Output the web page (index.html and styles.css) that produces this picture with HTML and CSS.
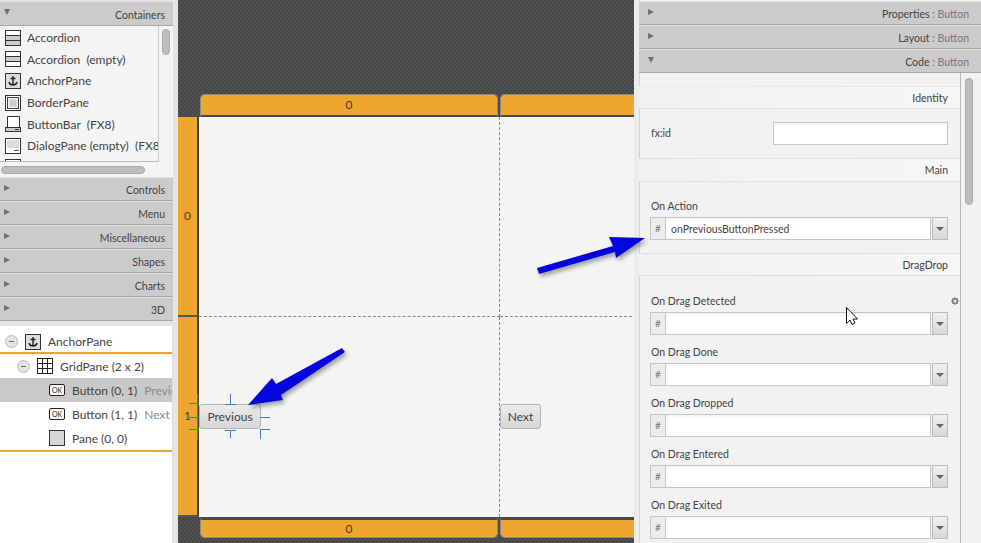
FILE: index.html
```html
<!DOCTYPE html>
<html lang="en">
<head>
<meta charset="utf-8">
<title>Scene Builder</title>
<link rel="stylesheet" href="styles.css">
</head>
<body>
<svg class="defs" width="0" height="0" aria-hidden="true">
  <symbol id="i-acc" viewBox="0 0 16 16"><rect x=".5" y=".5" width="15" height="15" fill="#ccc" stroke="#333"/><rect x="1" y="1" width="14" height="4" fill="#fff"/><path d="M1 5.500H15M1 10.500H15" stroke="#333"/></symbol>
  <symbol id="i-acc2" viewBox="0 0 16 16"><rect x=".5" y=".5" width="15" height="15" fill="#fff" stroke="#333"/><rect x="1" y="6" width="14" height="5" fill="#ccc"/><path d="M1 5.500H15M1 10.500H15" stroke="#333"/></symbol>
  <symbol id="i-anchor" viewBox="0 0 16 16"><rect x=".5" y=".5" width="15" height="15" fill="#ddd" stroke="#333"/><path d="M8 3V12M5.500 5.500H10.500M4 9C4.500 11.500 6 12 8 12S11.500 11.500 12 9" fill="none" stroke="#222" stroke-width="1.400"/></symbol>
  <symbol id="i-border" viewBox="0 0 16 16"><rect x=".5" y=".5" width="15" height="15" fill="#fff" stroke="#333"/><rect x="2.500" y="2.500" width="11" height="11" fill="#eee" stroke="#444"/><rect x="4.500" y="4.500" width="7" height="7" fill="#ccc"/></symbol>
  <symbol id="i-bar" viewBox="0 0 16 16"><path d="M2.500 .5H14.500V12.500H2.500Z" fill="#fff" stroke="#333"/><rect x=".5" y="11.500" width="15" height="4" fill="#ccc" stroke="#333"/><path d="M10 13.500H14" stroke="#333"/></symbol>
  <symbol id="i-dialog" viewBox="0 0 16 16"><rect x=".5" y=".5" width="15" height="15" fill="#fff" stroke="#333"/><rect x="2" y="2" width="12" height="8" fill="#ddd"/><path d="M9 12.500H14" stroke="#555"/></symbol>
  <symbol id="i-grid" viewBox="0 0 16 16"><rect x=".5" y=".5" width="15" height="15" fill="#fff" stroke="#222"/><path d="M5.500 1V15M10.500 1V15M1 5.500H15M1 10.500H15" stroke="#222"/></symbol>
  <symbol id="i-pane" viewBox="0 0 16 16"><rect x=".5" y=".5" width="15" height="15" fill="#d6d6d6" stroke="#333"/></symbol>
</svg>

<div class="app">
  <aside class="left">
    <div class="library">
      <div class="acc-head first"><span class="tri down"></span><span class="acc-title">Containers</span></div>
      <div class="palette">
        <div class="palette-view">
          <ul class="palette-list">
            <li><svg class="ico"><use href="#i-acc"/></svg>Accordion</li>
            <li><svg class="ico"><use href="#i-acc2"/></svg>Accordion&nbsp; (empty)</li>
            <li><svg class="ico"><use href="#i-anchor"/></svg>AnchorPane</li>
            <li><svg class="ico"><use href="#i-border"/></svg>BorderPane</li>
            <li><svg class="ico"><use href="#i-bar"/></svg>ButtonBar&nbsp; (FX8)</li>
            <li><svg class="ico"><use href="#i-dialog"/></svg>DialogPane (empty)&nbsp; (FX8)</li>
            <li><svg class="ico"><use href="#i-dialog"/></svg></li>
          </ul>
          <div class="vscroll"><span class="vthumb"></span></div>
        </div>
        <div class="hscroll"><span class="hthumb"></span></div>
      </div>
      <div class="acc-head"><span class="tri"></span><span class="acc-title">Controls</span></div>
      <div class="acc-head"><span class="tri"></span><span class="acc-title">Menu</span></div>
      <div class="acc-head"><span class="tri"></span><span class="acc-title">Miscellaneous</span></div>
      <div class="acc-head"><span class="tri"></span><span class="acc-title">Shapes</span></div>
      <div class="acc-head"><span class="tri"></span><span class="acc-title">Charts</span></div>
      <div class="acc-head"><span class="tri"></span><span class="acc-title">3D</span></div>
    </div>
    <div class="tree">
      <div class="row r-root"><span class="minus"></span><svg class="ico"><use href="#i-anchor"/></svg>AnchorPane</div>
      <div class="row r-grid"><span class="minus"></span><svg class="ico"><use href="#i-grid"/></svg>GridPane (2 x 2)</div>
      <div class="row r-leaf selected"><span class="okico">OK</span>Button (0, 1)<span class="hint">Previous</span></div>
      <div class="row r-leaf"><span class="okico">OK</span>Button (1, 1)<span class="hint">Next</span></div>
      <div class="row r-leaf r-last"><svg class="ico"><use href="#i-pane"/></svg>Pane (0, 0)</div>
    </div>
  </aside>

  <main class="center">
    <div class="grid">
      <div class="corner"></div>
      <div class="col-head"><span>0</span></div>
      <div class="col-head second"><span>1</span></div>

      <div class="row-head"><span>0</span></div>
      <div class="cell c-tl"></div>
      <div class="cell c-tr"></div>

      <div class="row-head"><span>1</span></div>
      <div class="cell c-bl"><button class="fx-btn selected-btn">Previous</button></div>
      <div class="cell c-br"><button class="fx-btn next-btn">Next</button></div>

      <div class="corner"></div>
      <div class="col-head bottom"><span>0</span></div>
      <div class="col-head bottom second"><span>1</span></div>
    </div>
  </main>

  <aside class="right">
    <div class="acc-head r"><span class="tri"></span><span class="acc-title">Properties <em>: Button</em></span></div>
    <div class="acc-head r"><span class="tri"></span><span class="acc-title">Layout <em>: Button</em></span></div>
    <div class="acc-head r"><span class="tri down"></span><span class="acc-title">Code <em>: Button</em></span></div>
    <div class="inspector">
      <div class="props">
        <div class="section s-first">Identity</div>
        <div class="fxid"><label>fx:id</label><span class="input"></span></div>
        <div class="section">Main</div>
        <div class="field f-action">
          <label>On Action</label>
          <div class="combo"><span class="hash">#</span><span class="input text">onPreviousButtonPressed</span><span class="drop"></span></div>
        </div>
        <div class="section s-drag">DragDrop</div>
        <div class="field f-first">
          <label>On Drag Detected</label>
          <div class="combo"><span class="hash">#</span><span class="input"></span><span class="drop"></span></div>
        </div>
        <div class="field">
          <label>On Drag Done</label>
          <div class="combo"><span class="hash">#</span><span class="input"></span><span class="drop"></span></div>
        </div>
        <div class="field">
          <label>On Drag Dropped</label>
          <div class="combo"><span class="hash">#</span><span class="input"></span><span class="drop"></span></div>
        </div>
        <div class="field">
          <label>On Drag Entered</label>
          <div class="combo"><span class="hash">#</span><span class="input"></span><span class="drop"></span></div>
        </div>
        <div class="field">
          <label>On Drag Exited</label>
          <div class="combo"><span class="hash">#</span><span class="input"></span><span class="drop"></span></div>
        </div>
      </div>
      <div class="iscroll"><span class="ithumb"></span></div>
    </div>
  </aside>
</div>

<svg class="overlay" width="981" height="543" viewBox="0 0 981 543" aria-hidden="true">
  <g class="handles">
    <path d="M197.500 394V440M189 403.500H199M189 417.500H199M189 429.500H199M230.500 394V404M225 404.500H236M230.500 430V438M225 430.500H236M260 417.500H270M260 429.500H270M260.500 429V439"/>
  </g>
  <g class="gear"><circle cx="955" cy="301" r="2.300"/><path d="M955 297V305M951 301H959M952.200 298.200L957.800 303.800M957.800 298.200L952.200 303.800"/></g>
  <polygon class="arrow" points="248,405 272,378 276,384 342,348 345,352 281,395 283,400"/>
  <polygon class="arrow" points="645,238 609,237 613,246 537,268 539,274 615,252 616,258"/>
  <path class="cursor" d="M846.500 307.500V323.500L850 320L852 324.500L855 323L853 319H857.500Z"/>
</svg>
</body>
</html>
```
FILE: styles.css
```css
* { box-sizing: border-box; }
html, body { margin: 0; padding: 0; height: 100%; overflow: hidden; background: #f2f2f2; }
body { font-family: Lato, "Open Sans", "Liberation Sans", sans-serif; font-size: 11px; color: #444; }
.defs { position: absolute; }
.app { display: flex; width: 981px; height: 543px; }

/* accordion headers */
.acc-head {
  display: flex; align-items: center; justify-content: space-between;
  height: 24px; padding: 0 8px 0 4px;
  background: #cbcbcb; border-top: 1px solid #e0e0e0; border-bottom: 1px solid #a9a9a9;
}
.acc-head.first { height: 25px; margin-top: 1px; }
.acc-title { color: #444; font-size: 10.500px; margin-top: 2px; }
.acc-title em { font-style: normal; color: #777; }
.tri { width: 0; height: 0; border-style: solid; border-width: 3.500px 0 3.500px 6px; border-color: transparent transparent transparent #707070; margin-top: -3px; }
.tri.down { border-width: 6px 3.500px 0 3.500px; border-color: #707070 transparent transparent transparent; }

/* left column */
.left { width: 178px; flex: none; display: flex; flex-direction: column; background: #e4e4e4; }
.library { width: 173px; }
.palette { height: 151px; background: #f4f4f4; display: flex; flex-direction: column; }
.palette-view { display: flex; height: 136px; }
.palette-list { list-style: none; margin: 0; padding: 1px 0 0 5px; width: 159px; height: 136px; overflow: hidden; background: #f4f4f4; border-right: 1px solid #ccc; border-bottom: 1px solid #bbb; }
.palette-list li { display: flex; align-items: center; height: 21.600px; flex: none; white-space: nowrap; font-size: 12px; }
.ico { width: 16px; height: 16px; margin-right: 6px; flex: none; }
.vscroll { flex: 1; padding: 3px 3px 0 3px; }
.vthumb { display: block; width: 8px; height: 26px; border-radius: 4px; background: #bdbdbd; border: 1px solid #aaa; }
.hscroll { height: 15px; padding: 4px 0 0 1px; }
.hthumb { display: block; width: 144px; height: 8px; border-radius: 4px; background: #bdbdbd; border: 1px solid #aaa; }

.tree { margin-top: 5px; width: 173px; flex: 1; background: #fff; padding-top: 5px; border-right: 1px solid #ddd; overflow: hidden; }
.row { display: flex; align-items: center; white-space: nowrap; font-size: 12px; height: 24px; overflow: hidden; }
.r-root { height: 21px; padding-left: 5px; }
.r-root .ico { margin: 0 7px 0 7px; }
.r-grid { padding-left: 17px; border-top: 2px solid #e9a638; height: 26px; }
.r-grid .ico { margin: 0 7px 0 7px; }
.r-leaf { padding-left: 49px; }
.r-leaf .ico { margin-right: 7px; }
.r-last { border-bottom: 2px solid #e9a638; height: 26px; }
.selected { background: #c9c9c9; }
.hint { margin-left: 7px; color: #8a8a8a; }
.minus { width: 13px; height: 13px; border-radius: 50%; background: #e4e4e4; border: 1px solid #bbb; position: relative; flex: none; }
.minus::after { content: ""; position: absolute; left: 3px; top: 5px; width: 5px; height: 1px; background: #666; }
.okico { width: 16px; height: 12px; border: 1px solid #222; border-radius: 2px; margin-right: 7px; font-size: 7px; line-height: 10px; text-align: center; color: #222; flex: none; background: #fff; }

/* centre */
.center {
  width: 456px; flex: none; overflow: hidden; padding-top: 94px;
  background-color: #4b4b4b;
  background-image: repeating-conic-gradient(#474747 0 25%, #505050 0 50%);
  background-size: 4px 4px;
}
.grid { display: grid; grid-template-columns: 21px 301px 301px; grid-template-rows: 23px 200px 200px 21px; width: 623px; }
.col-head { background: #eea62e; border: 1px solid #8c8c8c; border-bottom: 2px solid #4a4a4a; border-radius: 5px 5px 0 0; margin: 0 2px 0 1px; display: flex; align-items: center; justify-content: center; font-size: 12px; color: #4a3a1c; padding-bottom: 1px; }
.col-head.second { margin-left: 0; }
.col-head.bottom { border-radius: 0 0 5px 5px; border: 1px solid #8c8c8c; border-top: 2px solid #4a4a4a; margin-top: 1px; }
.row-head { background: #eea62e; border-right: 2px solid #444; border-bottom: 2px solid #555; display: flex; align-items: center; justify-content: center; font-size: 12px; color: #4a3a1c; padding-bottom: 2px; }
.cell { background: #f4f4f4; display: flex; align-items: center; }
.c-tl, .c-bl { border-right: 1px dashed #888; }
.c-tl, .c-tr { border-bottom: 1px dashed #888; }
.fx-btn { font: inherit; font-size: 12px; color: #444; padding: 0; background: linear-gradient(#ececec, #d6d6d6); border: 1px solid #b4b4b4; border-radius: 3px; height: 25px; margin-top: -1px; }
.selected-btn { width: 62px; }
.next-btn { width: 41px; }

/* right */
.right { flex: 1; display: flex; flex-direction: column; background: #f2f2f2; border-left: 5px solid #ececec; padding-top: 1px; box-shadow: inset 1px 0 0 #d4d4d4; position: relative; }
.acc-head.r .tri { margin-left: 5px; }
.acc-head.r { padding-right: 12px; }
.inspector { flex: 1; display: flex; min-height: 0; overflow: hidden; }
.props { width: 322px; flex: none; border-right: 1px solid #b7b7b7; padding-top: 13px; }
.section { height: 23px; line-height: 22px; text-align: right; padding-right: 12px; border-bottom: 1px solid #e0e0e0; border-top: 1px solid #e9e9e9; font-size: 10.500px; background: linear-gradient(90deg, #f2f2f2, #f6f6f6); }
.fxid { display: flex; align-items: center; justify-content: space-between; height: 50px; padding: 0 12px 1px 12px; border-bottom: 1px solid #e0e0e0; }
.fxid + .section { border-top: 0; }
.fxid .input { width: 175px; height: 23px; }
.input { display: block; background: linear-gradient(#f4f4f4, #fff 4px); border: 1px solid #c6c6c6; }
.input.text { font-size: 10.500px; line-height: 23px; padding-left: 5px; color: #444; }
label { font-size: 10.500px; }
.field label { padding-left: 1px; }
.field { padding: 0 12px 5px 11px; height: 51px; display: flex; flex-direction: column; justify-content: flex-end; gap: 5px; }
.f-action { height: 58px; padding-bottom: 0; margin-bottom: 13px; }
.s-drag { border-top: 1px solid #e0e0e0; }
.f-first { height: 64px; }
.combo { display: flex; height: 23px; flex: none; }
.hash { width: 15px; background: #ececec; border: 1px solid #c6c6c6; border-right: 0; text-align: center; line-height: 21px; color: #777; font-size: 10px; }
.combo .input { flex: 1; }
.drop { width: 16px; margin-left: 1px; background: linear-gradient(#f0f0f0, #d8d8d8); border: 1px solid #bcbcbc; position: relative; }
.drop::after { content: ""; position: absolute; left: 3px; top: 9px; border-style: solid; border-width: 4px 4px 0; border-color: #666 transparent transparent; }
.iscroll { flex: 1; padding: 5px 0 0 4px; }
.ithumb { display: block; width: 8px; height: 127px; border-radius: 4px; background: #bdbdbd; border: 1px solid #aaa; }

/* overlay */
.overlay { position: absolute; left: 0; top: 0; pointer-events: none; }
.handles path { fill: none; stroke: #3f7ad0; stroke-width: 1; }
.gear circle { fill: none; stroke: #777; stroke-width: 1.500; }
.gear path { fill: none; stroke: #777; stroke-width: 1; stroke-dasharray: 1.500 5; }
.arrow { fill: #0505e0; filter: drop-shadow(2px 3px 2px rgba(0, 0, 0, .35)); }
.cursor { fill: #fff; stroke: #111; stroke-width: 1; }
```
